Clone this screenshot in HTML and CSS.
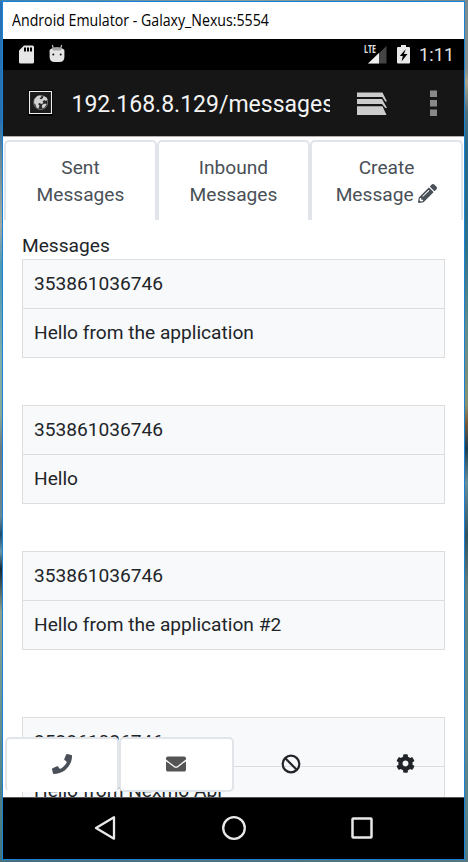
FILE: index.html
```html
<!DOCTYPE html>
<html lang="en">
<head>
<meta charset="utf-8">
<title>Android Emulator</title>
<link rel="stylesheet" href="styles.css">
</head>
<body>
<div class="window">
  <header class="titlebar"><span class="title-text">Android Emulator - Galaxy_Nexus:5554</span></header>
  <div class="status">
    <svg class="sd" width="15" height="19" viewBox="0 0 15 19"><path d="M5 .5h8.5q1.500 0 1.500 1.500v15q0 1.500-1.500 1.500h-12Q0 18.500 0 17V5.500z" fill="#e6e6e6"/><path d="M5 2.500h2v4H5zM8 2.500h2v4H8zM11 2.500h2v4h-2z" fill="#000"/></svg>
    <svg class="droid" width="16" height="19" viewBox="0 0 16 19"><path d="M3.300 1l1.200 4M12.700 1l-1.200 4" stroke="#bbb" stroke-width="1.200"/><path d="M.6 6q2-2.500 7.400-2.500T15.400 6v7q0 5-5 5H5.600q-5 0-5-5z" fill="#e4e4e4"/><path d="M2.500 4.500q5.500-2.500 11 0l-2 2h-7z" fill="#a5a5a5"/><circle cx="4.300" cy="10.500" r="1" fill="#111"/><circle cx="11.700" cy="10.500" r="1" fill="#111"/></svg>
    <span class="spring"></span>
    <span class="signal"><svg width="24" height="19" viewBox="0 0 24 19"><path d="M23.500 1v17.500H5z" fill="#444"/><path d="M16 8v10.500H5z" fill="#eee"/></svg><span class="lte">LTE</span></span>
    <svg class="battery" width="13" height="19" viewBox="0 0 13 19"><path d="M4 0h5v2h3q1 0 1 1v14.500q0 1-1 1H1q-1 0-1-1V3q0-1 1-1h3z" fill="#e8e8e8"/><path d="M8.800 4L2.800 11h3L4.500 16.500 10.500 9H7z" fill="#000"/></svg>
    <span class="clock">1:11</span>
  </div>
  <div class="urlbar">
    <svg class="globe" width="25" height="26" viewBox="0 0 25 26"><path d="M0 0h25v26H0z" fill="#000"/><path d="M1.500 1.500h22v22h-22z" fill="#1b1b1b" stroke="#eee" stroke-width="1.100"/><circle cx="12.700" cy="12.500" r="7" fill="#292929" stroke="#888" stroke-width=".8"/><path d="M6.500 9l3-3 3-.5 1 1.500-2 1.200 1.500 1.300 2-1.500.5-2 3 1.500 1.200 2-2 1.500-1.500-1-1.700 1.500 1 1.500-2 1-2-1-1.500 1 1.500 1.500-1 3-2-1-1-3-1.500-1.500zM14.500 14.500l3-1 1 1-2 3-2 .8-.7-2z" fill="#d2d2d2"/></svg>
    <div class="url">192.168.8.129/messages</div>
    <svg class="stack" width="31" height="24" viewBox="0 0 31 24"><path d="M0 .5h25.500L30 9.500h-1.700L25.300 5H0zM0 7h25l5 9h-1.700l-3.300-4H0zM0 14.300h25.500L29.500 23H0z" fill="#ccc"/></svg>
    <svg class="dots" width="7" height="27" viewBox="0 0 7 27"><path d="M0 .5h7v6.500H0zM0 10h7v6.500H0zM0 19.500h7V26H0z" fill="#898989"/></svg>
  </div>
  <main class="page">
    <nav class="tabs">
      <a class="tab">Sent<br>Messages</a>
      <a class="tab">Inbound<br>Messages</a>
      <a class="tab">Create<br>Message <svg class="pencil" width="19" height="19" viewBox="0 0 512 512"><path fill="currentColor" d="M497.900 142.100l-46.100 46.100c-4.700 4.700-12.300 4.700-17 0l-111-111c-4.700-4.700-4.700-12.300 0-17l46.100-46.100c18.700-18.700 49.100-18.700 67.900 0l60.100 60.100c18.800 18.700 18.800 49.100 0 68zM284.200 99.800L21.600 362.400.4 483.900c-2.900 16.400 11.400 30.600 27.800 27.800l121.500-21.300 262.600-262.600c4.700-4.700 4.700-12.300 0-17l-111-111c-4.800-4.700-12.400-4.700-17.100 0zM124.100 339.900c-5.500-5.500-5.500-14.300 0-19.800l154-154c5.500-5.500 14.300-5.500 19.800 0s5.500 14.300 0 19.800l-154 154c-5.500 5.500-14.300 5.500-19.800 0zM88 424h48v36.300l-64.500 11.300-31.100-31.100L51.700 376H88v48z"/></svg></a>
    </nav>
    <section class="messages">
      <div class="heading"><span>Messages</span></div>
      <div class="card"><div class="cell">353861036746</div><div class="cell">Hello from the application</div></div>
      <div class="card"><div class="cell">353861036746</div><div class="cell">Hello</div></div>
      <div class="card wide-gap"><div class="cell">353861036746</div><div class="cell">Hello from the application #2</div></div>
      <div class="card"><div class="cell">353861036746</div><div class="cell">Hello from Nexmo Api</div></div>
    </section>
    <nav class="dock">
      <a class="dock-item call"><svg width="20" height="20" viewBox="0 0 512 512"><path fill="#495057" d="M493.400 24.600l-104-24c-11.300-2.600-22.900 3.300-27.500 13.900l-48 112c-4.200 9.800-1.400 21.300 6.900 28l60.600 49.600c-36 76.700-98.900 140.500-177.200 177.200l-49.600-60.600c-6.800-8.300-18.200-11.100-28-6.900l-112 48C3.900 366.500-2 378.100.6 389.400l24 104C27.100 504.200 36.700 512 48 512c256.100 0 464-207.500 464-464 0-11.200-7.700-20.900-18.600-23.400z"/></svg></a>
      <a class="dock-item mail"><svg width="20" height="20" viewBox="0 0 512 512"><path fill="#555" d="M502.300 190.800c3.900-3.100 9.700-.2 9.700 4.700V400c0 26.500-21.500 48-48 48H48c-26.500 0-48-21.500-48-48V195.600c0-5 5.700-7.800 9.700-4.700 22.400 17.400 52.100 39.500 154.100 113.600 21.100 15.400 56.700 47.800 92.200 47.600 35.700.3 72-32.800 92.300-47.600 102-74.100 131.600-96.300 154-113.700zM256 320c23.200.4 56.600-29.200 73.400-41.400 132.700-96.300 142.800-104.700 173.400-128.700 5.800-4.500 9.200-11.500 9.200-18.900v-19c0-26.500-21.500-48-48-48H48c-26.500 0-48 21.500-48 48v19c0 7.400 3.400 14.300 9.200 18.900 30.600 23.900 40.700 32.400 173.400 128.700 16.800 12.200 50.200 41.800 73.400 41.400z"/></svg></a>
      <a class="dock-item plain"><svg width="20" height="20" viewBox="0 0 20 20"><circle cx="10" cy="10" r="8.300" fill="none" stroke="#212529" stroke-width="2.200"/><path d="M4.300 4.300l11.400 11.400" stroke="#212529" stroke-width="2.200"/></svg></a>
      <a class="dock-item plain"><svg width="19" height="19" viewBox="0 0 512 512"><path fill="#212529" d="M487.400 315.700l-42.600-24.600c4.300-23.200 4.300-47 0-70.200l42.600-24.600c4.900-2.800 7.100-8.600 5.500-14-11.100-35.600-30-67.800-54.700-94.600-3.800-4.100-10-5.100-14.800-2.300L380.800 110c-17.900-15.400-38.500-27.300-60.800-35.100V25.800c0-5.600-3.900-10.500-9.400-11.700-36.700-8.200-74.300-7.800-109.200 0-5.500 1.200-9.400 6.100-9.400 11.700V75c-22.200 7.900-42.800 19.800-60.800 35.100L88.700 85.500c-4.900-2.800-11-1.900-14.800 2.300-24.700 26.700-43.600 58.900-54.700 94.600-1.700 5.400.6 11.200 5.500 14L67.300 221c-4.300 23.200-4.300 47 0 70.200l-42.600 24.600c-4.900 2.800-7.100 8.600-5.500 14 11.100 35.600 30 67.800 54.700 94.600 3.800 4.100 10 5.100 14.800 2.300l42.600-24.600c17.900 15.400 38.500 27.300 60.800 35.100v49.200c0 5.600 3.900 10.500 9.400 11.700 36.700 8.200 74.300 7.800 109.200 0 5.500-1.200 9.400-6.100 9.400-11.700v-49.200c22.200-7.900 42.800-19.800 60.800-35.100l42.600 24.600c4.900 2.800 11 1.900 14.800-2.300 24.700-26.700 43.600-58.900 54.700-94.600 1.500-5.500-.7-11.300-5.600-14.100zM256 336c-44.100 0-80-35.900-80-80s35.900-80 80-80 80 35.900 80 80-35.900 80-80 80z"/></svg></a>
    </nav>
  </main>
  <footer class="navkeys">
    <svg width="24" height="26" viewBox="0 0 24 26"><path d="M21 2.300v21.400L3 13z" fill="none" stroke="#e8e8e8" stroke-width="2.300" stroke-linejoin="round"/></svg>
    <svg width="26" height="26" viewBox="0 0 26 26"><circle cx="13" cy="13" r="10.800" fill="none" stroke="#e8e8e8" stroke-width="2.300"/></svg>
    <svg width="24" height="26" viewBox="0 0 24 26"><rect x="2.500" y="3.500" width="19" height="19" rx=".7" fill="none" stroke="#e8e8e8" stroke-width="2.500"/></svg>
  </footer>
</div>
</body>
</html>
```
FILE: styles.css
```css
* { box-sizing: border-box; }
body {
  margin: 0;
  width: 468px;
  height: 862px;
  padding: 1px 3px 2px 2px;
  overflow: hidden;
  font-family: Roboto, sans-serif;
  background:
    linear-gradient(90deg, #3b82ad, #8a9c9d 50%, #75898d) top / 100% 1px no-repeat,
    linear-gradient(90deg, #47707e, #567780) bottom / 100% 2px no-repeat,
    linear-gradient(#7d8c8f 0, #858f8c 8%, #b0a58c 9.500%, #53717c 13%, #246887 17%, #2b7189 28%, #648c8a 38%, #8b9270 47%, #7c5c38 49%, #203d50 52%, #6b8f98 56%, #456676 60%, #34505c 62%, #637f7c 68%, #66898a 85%, #507b86 100%) right / 3px 100% no-repeat,
    linear-gradient(#2872b5 0, #286fae 14%, #6b8994 18%, #a2aaa0 26%, #4c98b6 31%, #83afa8 42%, #8aa997 48%, #6d7c80 52%, #6a8790 60%, #1e4c6c 62%, #6b98a8 64%, #182a35 66%, #8da18d 71%, #709791 80%, #42737c 100%) left / 2px 100% no-repeat;
}
svg { display: block; flex: none; }
.window {
  display: flex;
  flex-direction: column;
  width: 463px;
  height: 859px;
  border: 1px solid #1683d9;
  background: #fff;
}
.titlebar {
  height: 37px;
  padding-left: 9px;
  font: 15.500px/37px "Open Sans", sans-serif;
  color: #000;
  white-space: nowrap;
}
.title-text { display: inline-block; transform-origin: left; transform: scaleX(.914); }
.status { display: flex; height: 31px; padding: 6px 11px 0 16px; background: #000; }
.sd { margin-left: -.5px; }
.droid { margin: -1px 0 0 15px; }
.spring { flex: 1; }
.signal { position: relative; margin-right: 10px; }
.lte { position: absolute; left: 1px; top: 0; font: 700 10px/9px "Open Sans", sans-serif; color: #e8e8e8; transform-origin: left; transform: scaleX(.7); }
.battery { margin-right: 9px; }
.clock { width: 34px; font-size: 18px; line-height: 20px; color: #e2e2e2; letter-spacing: .1px; white-space: nowrap; }
.urlbar { display: flex; align-items: center; height: 66px; padding: 0 27px 0 25px; background: #161616; }
.url { width: 259px; margin-left: 18px; padding: 3px 0 0 .5px; overflow: hidden; font-size: 23px; line-height: 34px; color: #f3f3f3; white-space: nowrap; }
.stack { margin: 2px 0 0 27px; }
.dots { margin-left: 42px; }
.page { position: relative; height: 661px; border-top: 1px solid #b5b0b0; overflow: hidden; color: #212529; font-size: 19.150px; }
.tabs { display: flex; height: 83px; padding: 3px 1px 0; }
.tab {
  flex: 1;
  padding-top: 12px;
  border: 2px solid #e1e4e8;
  border-bottom: 0;
  border-radius: 5px 5px 0 0;
  color: #495057;
  line-height: 27px;
  text-align: center;
}
.tab .pencil { display: inline-block; vertical-align: -2px; }
.messages { padding: 11px 19px 0; }
.heading { height: 28px; line-height: 29px; }
.card { height: 99px; margin-bottom: 47px; border: 1px solid #dbdddf; background: #f8f9fa; }
.card.wide-gap { margin-bottom: 67px; }
.cell { height: 48px; padding-left: 11px; line-height: 48px; white-space: nowrap; }
.cell + .cell { height: 49px; border-top: 1px solid #dbdddf; line-height: 47px; }
.dock { position: absolute; left: 1.500px; bottom: 5px; display: flex; height: 55px; }
.dock-item { display: flex; width: 114.500px; padding-bottom: 2px; align-items: center; justify-content: center; }
.call, .mail { border: 2px solid #e1e4e8; border-radius: 5px; background: #fff; }
.call { border-bottom-color: #fff; }
.navkeys { display: flex; flex: 1; align-items: center; justify-content: space-between; padding: 0 90px 1px; border-top: 1px solid #555; background: #000; }
```
